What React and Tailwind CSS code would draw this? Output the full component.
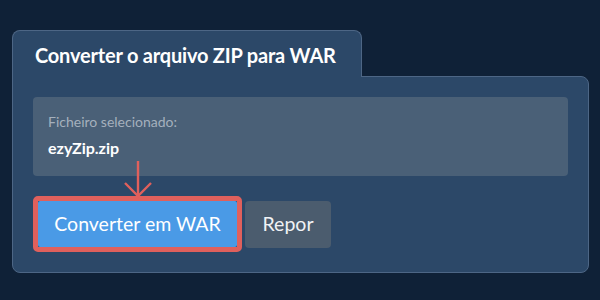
import React from 'react';

export default function App() {
  return (
    <div className="w-[600px] h-[300px] bg-[#0f2137] pt-[30px] pl-[12px] font-['Lato','Liberation_Sans',sans-serif]">
      {/* tab header */}
      <div className="relative z-10 -mb-px w-[350px] h-[47px] bg-[#2c4868] border border-b-0 border-[#4d6685] rounded-t-[8px] pl-[22px] pt-[13px]">
        <h1 className="text-[20px] font-bold text-white leading-[22px] tracking-[-0.2px]">Converter o arquivo ZIP para WAR</h1>
      </div>

      {/* card body */}
      <div className="w-[577px] h-[197px] bg-[#2c4868] border border-[#4d6685] rounded-tr-[8px] rounded-b-[8px] px-[20px] pt-[20px]">
        <div className="h-[79px] bg-[#4a6077] rounded-[4px] px-[15px] pt-[16px]">
          <div className="text-[14px] leading-[17px] text-[#a5b0bd]">Ficheiro selecionado:</div>
          <div className="mt-[8px] text-[16px] leading-[19px] font-bold text-white">ezyZip.zip</div>
        </div>

        <div className="mt-[20px] flex items-center gap-[3px]">
          <div className="relative border-[5px] border-[#e0605c] rounded-[5px]">
            <svg
              className="absolute left-1/2 -translate-x-1/2 bottom-full mb-[3px]"
              width="30"
              height="37"
              viewBox="0 0 30 37"
              fill="none"
              stroke="#e0605c"
              strokeWidth="2.4"
            >
              <path d="M15 0 V35" />
              <path d="M2 22 L15 35 L28 22" />
            </svg>
            <button className="block w-[199px] h-[46px] bg-[#4a9ae6] text-white text-[19.5px] rounded-[2px]">
              Converter em WAR
            </button>
          </div>
          <button className="w-[86px] h-[47px] bg-[#4b5c6e] text-[#f0f2f5] text-[19.5px] rounded-[4px]">
            Repor
          </button>
        </div>
      </div>
    </div>
  );
}
